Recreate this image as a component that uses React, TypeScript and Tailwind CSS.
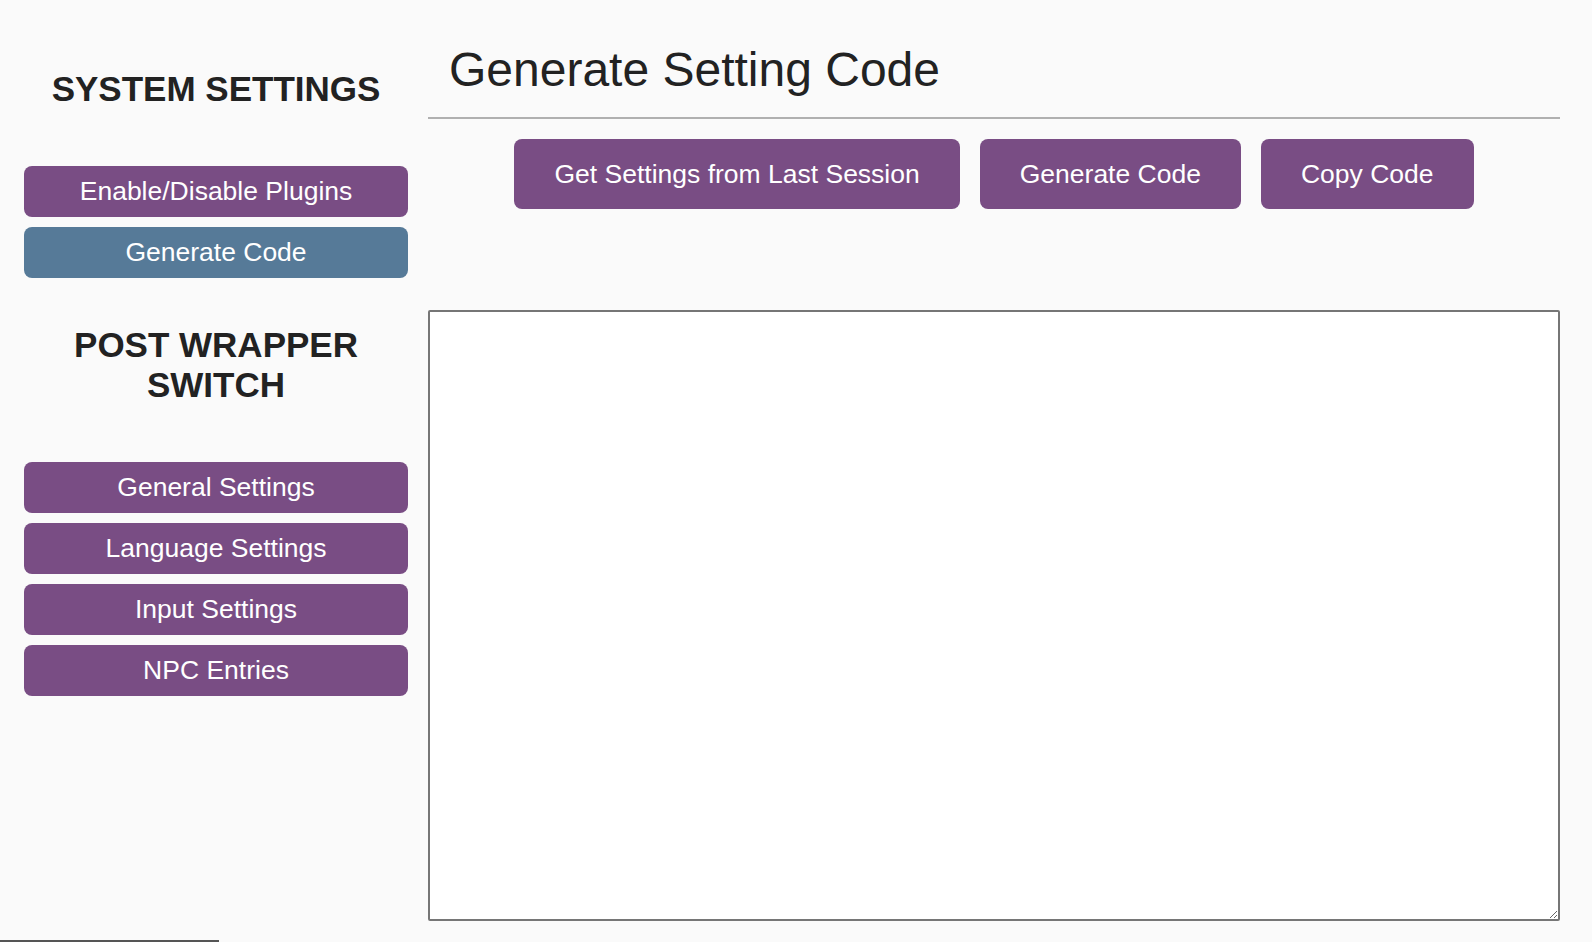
const sideLinks = ['General Settings', 'Language Settings', 'Input Settings', 'NPC Entries'];

function SideButton({ label, active }: { label: string; active?: boolean }) {
    return (
        <button
            className={
                active
                    ? 'flex h-[51px] w-full items-center justify-center rounded-[8px] bg-[#567a98] text-[26.5px] text-white'
                    : 'flex h-[51px] w-full items-center justify-center rounded-[8px] bg-[#794d84] text-[26.5px] text-white'
            }
        >
            {label}
        </button>
    );
}

function ActionButton({ label }: { label: string }) {
    return (
        <button className="flex h-[70px] items-center rounded-[8px] bg-[#794d84] px-[40px] pt-[2px] text-[26.5px] text-white">
            {label}
        </button>
    );
}

export default function App() {
    return (
        <div className="flex h-[942px] flex-col overflow-hidden bg-[#fafafa] font-['Liberation_Sans',Arial,sans-serif] text-[#222]">
            <div className="flex flex-1 gap-[20px]">
                <aside className="flex w-[408px] shrink-0 flex-col pt-[69px] pl-[24px]">
                    <h2 className="text-center text-[35px] leading-[40px] font-bold">SYSTEM SETTINGS</h2>
                    <nav className="mt-[57px] flex flex-col gap-[10px]">
                        <SideButton label="Enable/Disable Plugins" />
                        <SideButton label="Generate Code" active />
                    </nav>

                    <h2 className="mt-[47px] px-[40px] text-center text-[35px] leading-[40px] font-bold">
                        POST WRAPPER SWITCH
                    </h2>
                    <nav className="mt-[57px] flex flex-col gap-[10px]">
                        {sideLinks.map((l) => (
                            <SideButton key={l} label={l} />
                        ))}
                    </nav>
                </aside>

                <main className="flex w-[1132px] flex-col pt-[42px]">
                    <h1 className="pl-[21px] text-[48px] leading-[55px]">Generate Setting Code</h1>
                    <hr className="mt-[20px] border-t-2 border-[#b0b0b0]" />
                    <div className="mt-[20px] flex justify-center gap-[20px]">
                        <ActionButton label="Get Settings from Last Session" />
                        <ActionButton label="Generate Code" />
                        <ActionButton label="Copy Code" />
                    </div>
                    <textarea className="mt-[101px] h-[611px] w-full rounded-[2px] border-2 border-[#767676] bg-white" />
                </main>
            </div>
            <div className="h-[2px] w-[219px] bg-[#555]" />
        </div>
    );
}
